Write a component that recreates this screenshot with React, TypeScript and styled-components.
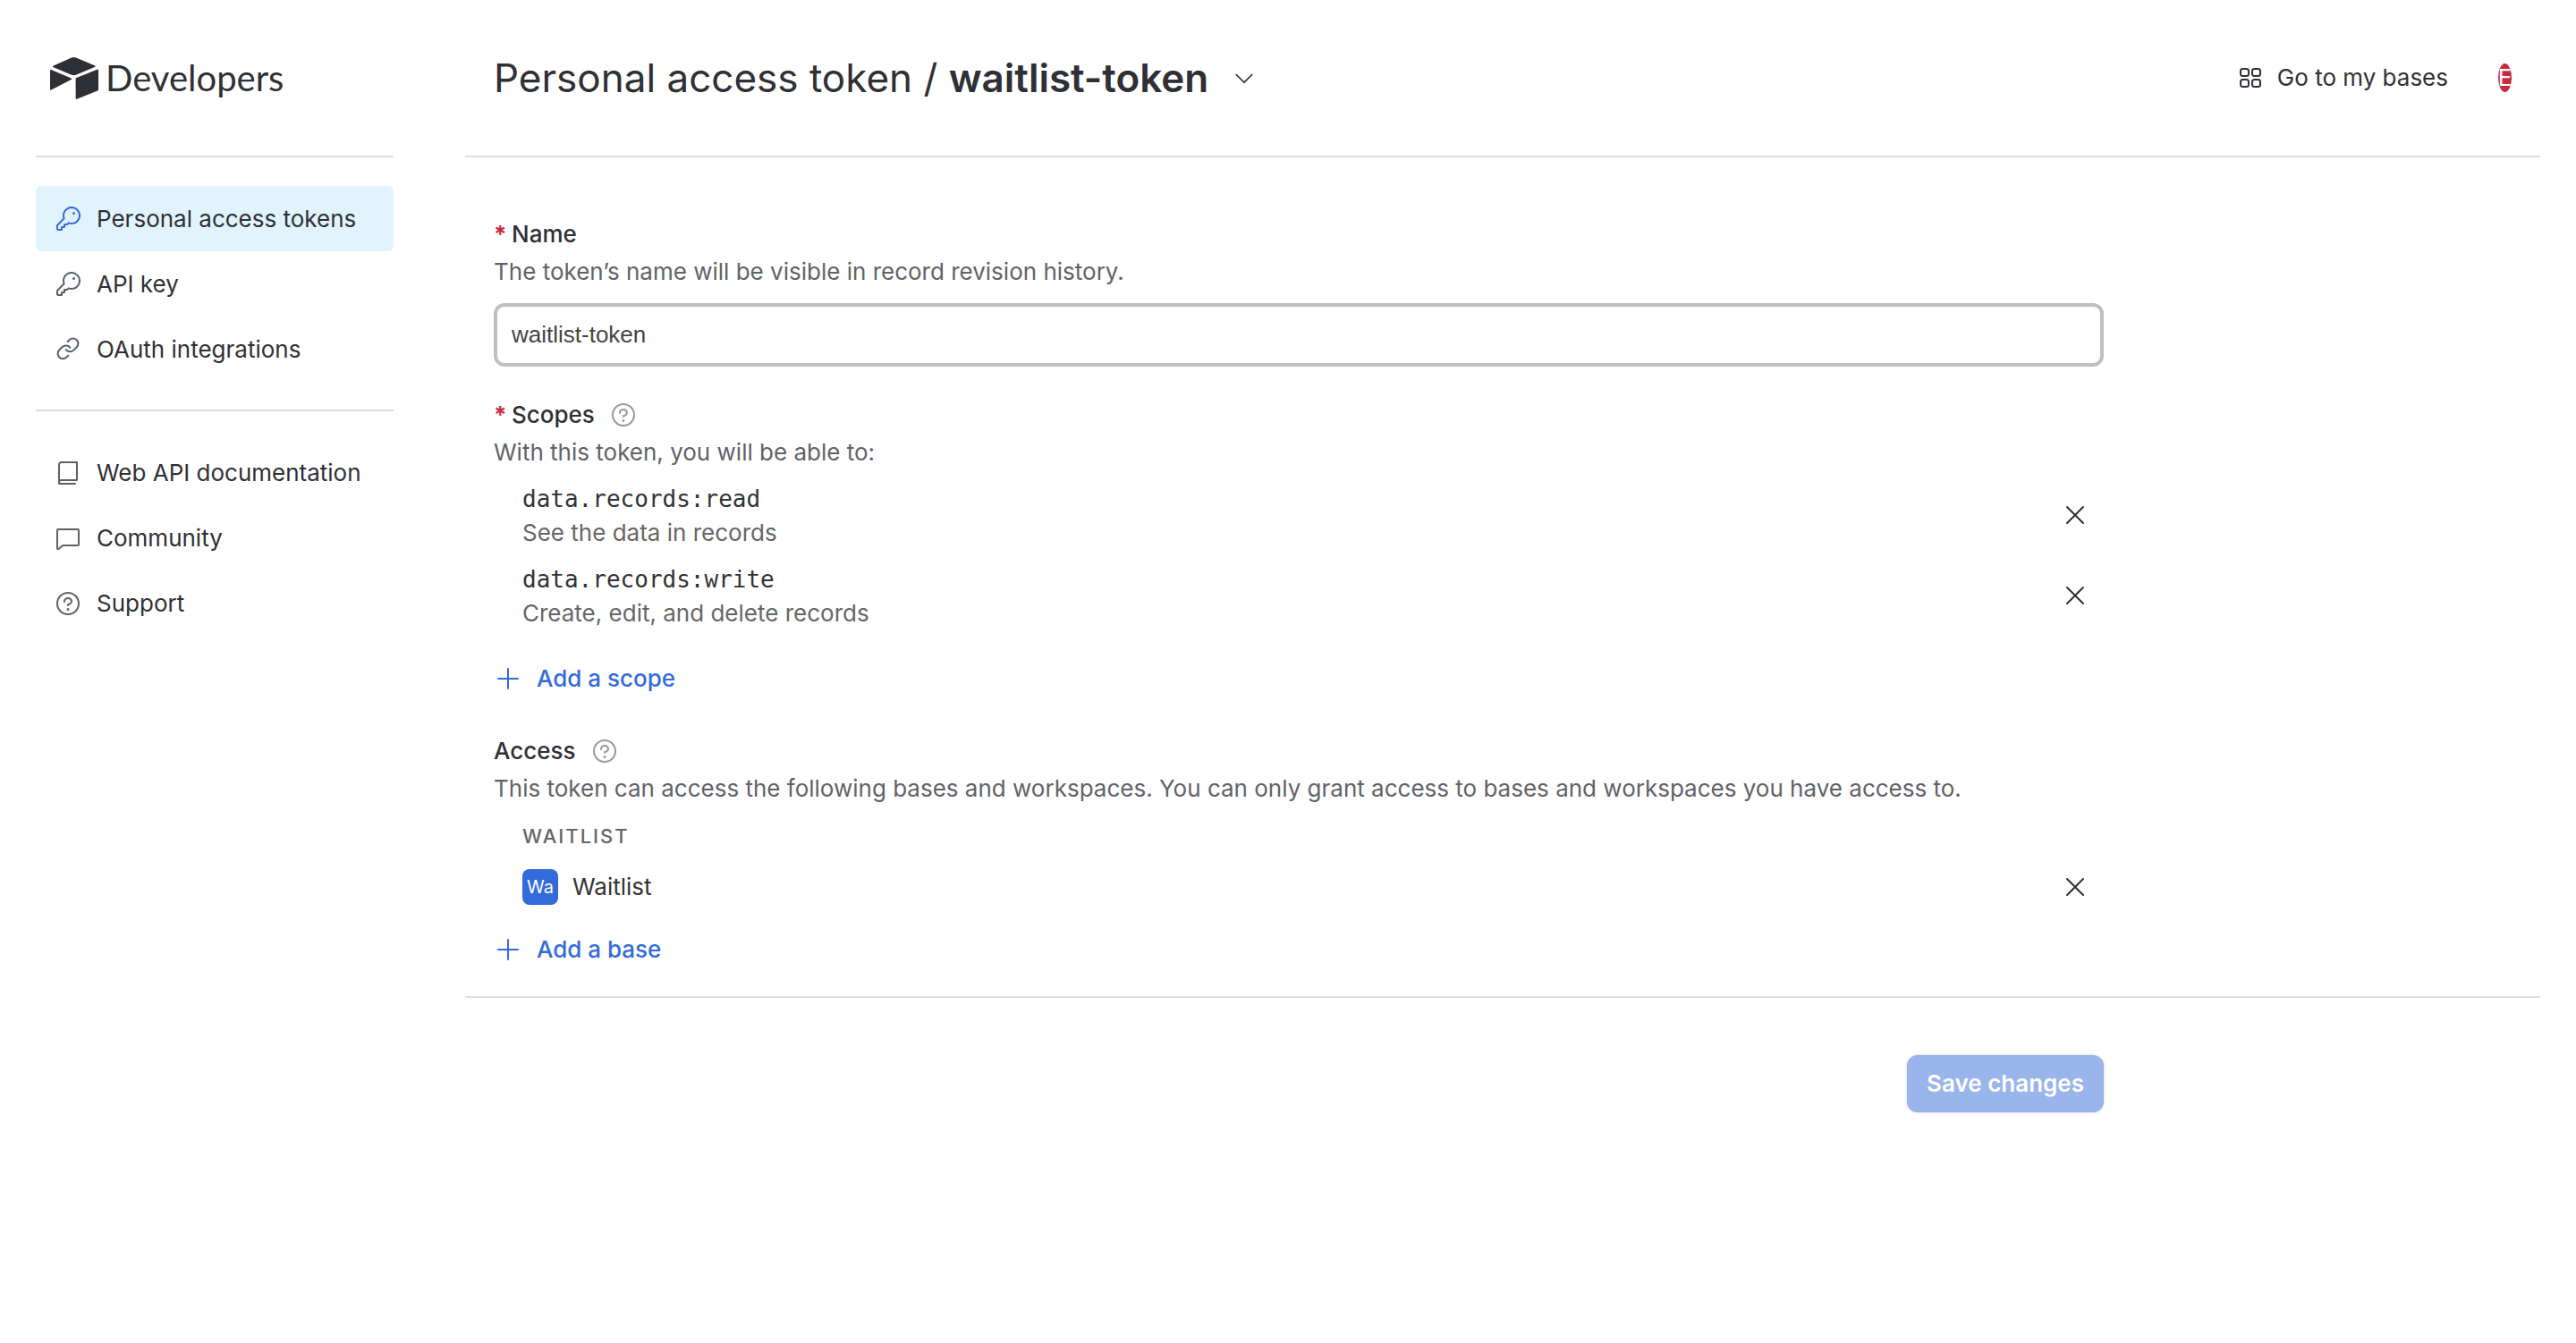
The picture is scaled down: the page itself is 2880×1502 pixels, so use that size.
import React, { useState } from "react";
import styled, { createGlobalStyle } from "styled-components";
import { PiKey, PiQuestion, PiCaretDown, PiPlus, PiX } from "react-icons/pi";

const color = {
  text: "#2f3035",
  muted: "#616267",
  subtle: "#666666",
  line: "#dddddd",
  blue: "#346bdb",
  red: "#ca2a41",
};

const GlobalStyle = createGlobalStyle`
  *, *::before, *::after { box-sizing: border-box; }
  body {
    margin: 0;
    background: #fff;
    color: ${color.text};
    font-family: Inter, "Liberation Sans", sans-serif;
    font-size: 26px;
    line-height: 42px;
  }
  h1, h2, p, ul { margin: 0; padding: 0; }
  ul { list-style: none; }
  button, input { font: inherit; color: inherit; }
  a { color: inherit; text-decoration: none; }
  svg { flex: none; display: block; }
`;

const Page = styled.div`
  display: flex;
  gap: 80px;
  padding: 0 40px;
`;

const Sidebar = styled.aside`
  flex: 0 0 400px;
`;

const Main = styled.main`
  flex: 1;
  min-width: 0;
`;

const HeaderBar = styled.header`
  display: flex;
  align-items: center;
  height: 176px;
  padding: 0 32px;
  border-bottom: 2px solid ${color.line};
`;

const LogoBar = styled(HeaderBar)`
  padding: 0 16px;
`;

const LogoLink = styled.a`
  display: flex;
  align-items: center;
  gap: 8px;
  font-family: Lato, sans-serif;
  font-size: 40px;
  font-weight: 400;
  line-height: 48px;
`;

const NavList = styled.ul`
  padding: 32px 0 31px;

  & + & {
    border-top: 2px solid ${color.line};
  }
`;

const NavLink = styled.a<{ $active?: boolean; $tint?: string }>`
  display: flex;
  align-items: center;
  gap: 16px;
  height: 73px;
  padding: 0 20px;
  border-radius: 6px;
  background: ${(p) => (p.$active ? "#e1f4fe" : "transparent")};

  svg {
    color: ${(p) => (p.$active ? color.blue : p.$tint)};
  }
`;

const Title = styled.h1`
  font-size: 44px;
  font-weight: 400;
  line-height: 60px;
`;

const TokenName = styled.strong`
  font-weight: 600;
`;

const IconButton = styled.button`
  display: flex;
  align-items: center;
  justify-content: center;
  width: 40px;
  height: 40px;
  padding: 0;
  border: 0;
  background: none;
  cursor: pointer;
`;

const TitleGroup = styled.div`
  display: flex;
  align-items: center;
  gap: 20px;
  flex: 1;
`;

const BasesLink = styled.a`
  display: flex;
  align-items: center;
  gap: 14px;
`;

const Avatar = styled.button`
  display: flex;
  align-items: center;
  justify-content: center;
  width: 15px;
  height: 32px;
  margin-left: 56px;
  padding: 0;
  border: 0;
  border-radius: 50%;
  overflow: hidden;
  background: ${color.red};
  color: #fff;
`;

const Form = styled.form`
  max-width: 1864px;
  padding: 65px 32px 31px;
`;

const Section = styled.section<{ $gap?: number }>`
  margin-top: ${(p) => p.$gap ?? 0}px;
`;

const Label = styled.label`
  display: flex;
  align-items: center;
  font-weight: 500;
`;

const Heading = styled.h2`
  display: flex;
  align-items: center;
  font-size: 26px;
  font-weight: 500;
  line-height: 42px;
`;

const Required = styled.span`
  width: 20px;
  color: ${color.red};
  font-weight: 700;
`;

const HelpButton = styled(IconButton)`
  margin-left: 12px;
  color: #999;
`;

const Hint = styled.p`
  color: ${color.muted};
`;

const TextInput = styled.input`
  display: block;
  width: 100%;
  height: 71px;
  margin-top: 14px;
  padding: 0 16px;
  border: 4px solid #bfbfbf;
  border-radius: 12px;
  background: #fff;
  color: #444;
  font-family: "Liberation Sans", sans-serif;
  outline: none;
`;

const Rows = styled.ul`
  padding: 4px 12px 0 32px;
`;

const Row = styled.li`
  display: flex;
  align-items: center;
  justify-content: space-between;
  min-height: 64px;
`;

const ScopeRow = styled(Row)`
  padding: 7px 0;
`;

const ScopeName = styled.p`
  font-family: "DejaVu Sans Mono", monospace;
  line-height: 40px;
  color: #333;
`;

const ScopeText = styled.p`
  line-height: 36px;
  color: ${color.subtle};
`;

const AddButton = styled.button<{ $gap: number }>`
  display: flex;
  align-items: center;
  gap: 16px;
  margin-top: ${(p) => p.$gap}px;
  padding: 0;
  border: 0;
  background: none;
  color: ${color.blue};
  font-weight: 500;
  cursor: pointer;
`;

const Workspace = styled.h3`
  margin: 16px 0 5px 32px;
  color: ${color.subtle};
  font-size: 22px;
  font-weight: 500;
  line-height: 32px;
  letter-spacing: 2px;
  text-transform: uppercase;
`;

const Base = styled.span`
  display: flex;
  align-items: center;
  gap: 16px;
  color: #333;
`;

const BaseIcon = styled.span`
  width: 40px;
  height: 40px;
  border-radius: 8px;
  background: ${color.blue};
  color: #fff;
  font-size: 20px;
  line-height: 40px;
  text-align: center;
`;

const Footer = styled.footer`
  border-top: 2px solid ${color.line};
`;

const Actions = styled.div`
  display: flex;
  justify-content: flex-end;
  max-width: 1864px;
  padding: 64px 32px;
`;

const SaveButton = styled.button`
  height: 64px;
  padding: 0 22px;
  border: 0;
  border-radius: 12px;
  background: #9ab4ec;
  box-shadow: 0 0 3px rgba(0, 0, 0, 0.2);
  color: #fff;
  font-weight: 600;
`;

const Logo = () => (
  <svg width="54" height="47" viewBox="0 0 54 47" fill="currentColor" aria-hidden="true">
    <path d="M24 .6Q26.5-.4 29 .6L49.800 9.300Q51.400 10.200 49.800 11L29 19.700Q26.500 20.600 24 19.700L3.700 11.300Q2.200 10.400 3.700 9.500Z" />
    <path d="M0 15Q0 13.700 1.300 14.100L23.600 23.400Q24.800 24.200 23.700 25L1.300 36.500Q0 37 0 35.700Z" />
    <path d="M52.600 13.700Q54 13.300 54 14.600V36Q54 37 53 37.500L30 46.800Q28.600 47.200 28.600 45.800V24.500Q28.600 23.500 29.500 23.100Z" />
  </svg>
);

type IconProps = { size?: number; viewBox?: string; weight?: number; children?: React.ReactNode };

const LineIcon = ({ size = 32, viewBox = "0 0 32 32", weight = 2, children }: IconProps) => (
  <svg
    width={size}
    height={size}
    viewBox={viewBox}
    fill="none"
    stroke="currentColor"
    strokeWidth={weight}
    strokeLinecap="round"
    strokeLinejoin="round"
    aria-hidden="true"
  >
    {children}
  </svg>
);

const LinkIcon = ({ size }: IconProps) => (
  <LineIcon size={size} viewBox="-2 -1 28 28" weight={1.8}>
    <path d="M10 13a5 5 0 0 0 7.540.540l3-3a5 5 0 0 0-7.070-7.070l-1.720 1.710" />
    <path d="M14 11a5 5 0 0 0-7.540-.540l-3 3a5 5 0 0 0 7.070 7.070l1.710-1.710" />
  </LineIcon>
);

const BookIcon = ({ size }: IconProps) => (
  <LineIcon size={size}>
    <path d="M6 28V7Q6 4 9 4H26V24H8.500Q6 24 6 26.500M6 28H24" />
  </LineIcon>
);

const ChatIcon = ({ size }: IconProps) => (
  <LineIcon size={size}>
    <path d="M5 6H27Q28 6 28 7V23Q28 24 27 24H11Q10 24 9.200 24.700L6 27.600Q4 29 4 27V7Q4 6 5 6Z" />
  </LineIcon>
);

const GridIcon = ({ size }: IconProps) => (
  <LineIcon size={size}>
    <rect x="5" y="6" width="9" height="8" rx="2.500" />
    <rect x="18" y="6" width="9" height="8" rx="2.500" />
    <rect x="5" y="18" width="9" height="8" rx="2.500" />
    <rect x="18" y="18" width="9" height="8" rx="2.500" />
  </LineIcon>
);

const primaryNav = [
  { label: "Personal access tokens", icon: PiKey, active: true },
  { label: "API key", icon: PiKey },
  { label: "OAuth integrations", icon: LinkIcon },
];

const secondaryNav = [
  { label: "Web API documentation", icon: BookIcon },
  { label: "Community", icon: ChatIcon },
  { label: "Support", icon: PiQuestion },
];

const scopes = [
  { name: "data.records:read", text: "See the data in records" },
  { name: "data.records:write", text: "Create, edit, and delete records" },
];

export default function App() {
  const [name, setName] = useState("waitlist-token");

  return (
    <>
      <GlobalStyle />
      <Page>
        <Sidebar>
          <LogoBar>
            <LogoLink href="#home">
              <Logo />
              Developers
            </LogoLink>
          </LogoBar>
          <nav>
            <NavList>
              {primaryNav.map(({ label, icon: Icon, active }) => (
                <li key={label}>
                  <NavLink href="#nav" $active={active} $tint="#5a5f6b">
                    <Icon size={32} />
                    {label}
                  </NavLink>
                </li>
              ))}
            </NavList>
            <NavList>
              {secondaryNav.map(({ label, icon: Icon }) => (
                <li key={label}>
                  <NavLink href="#nav" $tint="#616161">
                    <Icon size={32} />
                    {label}
                  </NavLink>
                </li>
              ))}
            </NavList>
          </nav>
        </Sidebar>

        <Main>
          <HeaderBar>
            <TitleGroup>
              <Title>
                Personal access token / <TokenName>waitlist-token</TokenName>
              </Title>
              <IconButton type="button" aria-label="Token options">
                <PiCaretDown size={28} />
              </IconButton>
            </TitleGroup>
            <BasesLink href="#bases">
              <GridIcon size={32} />
              Go to my bases
            </BasesLink>
            <Avatar type="button">E</Avatar>
          </HeaderBar>

          <Form id="token-form" onSubmit={(e) => e.preventDefault()}>
            <Section>
              <Label htmlFor="token-name">
                <Required>*</Required>Name
              </Label>
              <Hint>The token’s name will be visible in record revision history.</Hint>
              <TextInput
                id="token-name"
                type="text"
                value={name}
                onChange={(e) => setName(e.target.value)}
              />
            </Section>

            <Section $gap={33}>
              <Heading>
                <Required>*</Required>Scopes
                <HelpButton type="button" aria-label="About scopes">
                  <PiQuestion size={32} />
                </HelpButton>
              </Heading>
              <Hint>With this token, you will be able to:</Hint>
              <Rows>
                {scopes.map((scope) => (
                  <ScopeRow key={scope.name}>
                    <div>
                      <ScopeName>{scope.name}</ScopeName>
                      <ScopeText>{scope.text}</ScopeText>
                    </div>
                    <IconButton type="button" aria-label={`Remove ${scope.name}`}>
                      <PiX size={32} />
                    </IconButton>
                  </ScopeRow>
                ))}
              </Rows>
              <AddButton type="button" $gap={27}>
                <PiPlus size={32} />
                Add a scope
              </AddButton>
            </Section>

            <Section $gap={39}>
              <Heading>
                Access
                <HelpButton type="button" aria-label="About access">
                  <PiQuestion size={32} />
                </HelpButton>
              </Heading>
              <Hint>
                This token can access the following bases and workspaces. You can only grant access
                to bases and workspaces you have access to.
              </Hint>
              <Workspace>Waitlist</Workspace>
              <Rows>
                <Row>
                  <Base>
                    <BaseIcon>Wa</BaseIcon>
                    Waitlist
                  </Base>
                  <IconButton type="button" aria-label="Remove Waitlist">
                    <PiX size={32} />
                  </IconButton>
                </Row>
              </Rows>
              <AddButton type="button" $gap={17}>
                <PiPlus size={32} />
                Add a base
              </AddButton>
            </Section>
          </Form>

          <Footer>
            <Actions>
              <SaveButton type="submit" form="token-form" disabled>
                Save changes
              </SaveButton>
            </Actions>
          </Footer>
        </Main>
      </Page>
    </>
  );
}
